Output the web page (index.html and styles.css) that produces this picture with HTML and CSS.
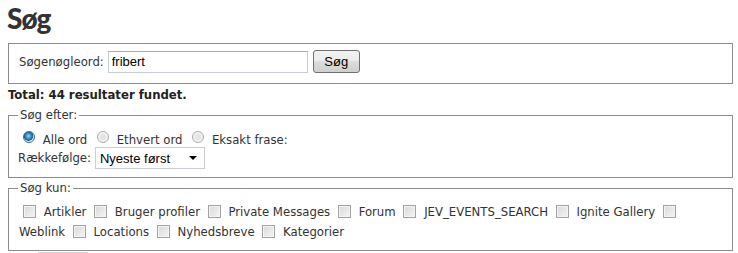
FILE: index.html
```html
<!DOCTYPE html>
<html lang="da">
<head>
    <meta charset="UTF-8">
    <title>Søg</title>
    <link rel="stylesheet" href="styles.css">
</head>
<body>
<div class="page">
    <h1 class="title">Søg</h1>

    <form class="search-form">
        <fieldset class="box keyword-box">
            <label for="searchword">Søgenøgleord:</label>
            <input type="text" id="searchword" class="text-input" value="fribert">
            <button type="button" class="btn">Søg</button>
        </fieldset>

        <p class="total">Total: 44 resultater fundet.</p>

        <fieldset class="box phrase-box">
            <legend>Søg efter:</legend>
            <div class="row radios">
                <input type="radio" name="phrase" id="all" checked> <label for="all">Alle ord</label>
                <input type="radio" name="phrase" id="any"> <label for="any">Ethvert ord</label>
                <input type="radio" name="phrase" id="exact"> <label for="exact">Eksakt frase:</label>
            </div>
            <div class="row order-row">
                <label for="ordering">Rækkefølge:</label>
                <span class="select-wrap">
                    <select id="ordering" class="select">
                        <option>Nyeste først</option>
                        <option>Ældste først</option>
                    </select>
                </span>
            </div>
        </fieldset>

        <fieldset class="box areas-box">
            <legend>Søg kun:</legend>
            <div class="areas">
                <input type="checkbox" id="a1"> <label for="a1">Artikler</label>
                <input type="checkbox" id="a2"> <label for="a2">Bruger profiler</label>
                <input type="checkbox" id="a3"> <label for="a3">Private Messages</label>
                <input type="checkbox" id="a4"> <label for="a4">Forum</label>
                <input type="checkbox" id="a5"> <label for="a5">JEV_EVENTS_SEARCH</label>
                <input type="checkbox" id="a6"> <label for="a6">Ignite Gallery</label>
                <input type="checkbox" id="a7"> <label for="a7">Weblink</label>
                <input type="checkbox" id="a8"> <label for="a8">Locations</label>
                <input type="checkbox" id="a9"> <label for="a9">Nyhedsbreve</label>
                <input type="checkbox" id="a10"> <label for="a10">Kategorier</label>
            </div>
        </fieldset>
        <div class="pager-edge"></div>
    </form>
</div>
</body>
</html>
```

FILE: styles.css
```css
body {
    margin: 0;
    background: #fff;
    color: #333;
    font-family: 'DejaVu Sans Condensed', 'DejaVu Sans', sans-serif;
    font-size: 13px;
}
.page {
    width: 725px;
    margin-left: 8px;
}
.title {
    margin: 0 0 0 -1px;
    padding-top: 1px;
    height: 35px;
    font-family: Lato, 'DejaVu Sans Condensed', sans-serif;
    font-size: 28px;
    line-height: 34px;
    font-weight: 900;
    letter-spacing: -1px;
    color: #333;
}
.box {
    margin: 0;
    border: 1px solid #8c8c8c;
    padding: 0 10px;
    min-width: 0;
}
.box legend {
    padding: 0 2px;
    margin-left: -1px;
    line-height: 16px;
}
.keyword-box {
    margin-top: 7px;
    padding-top: 6px;
    padding-bottom: 10px;
    height: 41px;
    box-sizing: border-box;
    display: flex;
    align-items: center;
}
.keyword-box label {
    margin-right: 4px;
}
.text-input {
    width: 200px;
    height: 22px;
    box-sizing: border-box;
    padding: 1px 3px;
    border: 1px solid #c9ccd3;
    border-top-color: #abadb3;
    font-family: 'Liberation Sans', Arial, sans-serif;
    font-size: 13px;
    color: #000;
    margin: 0 5px 0 0;
}
.btn {
    width: 47px;
    height: 23px;
    padding: 0;
    border: 1px solid #707070;
    border-radius: 3px;
    background: linear-gradient(#f2f2f2 0%, #ebebeb 49%, #dddddd 50%, #cfcfcf 100%);
    font-family: 'Liberation Sans', Arial, sans-serif;
    font-size: 13px;
    color: #000;
}
.total {
    margin: 0;
    padding: 3px 0 4px;
    line-height: 16px;
    font-weight: bold;
    color: #222;
}
.row {
    line-height: 20px;
    height: 20px;
}
.radios {
    margin-top: 5px;
}
.radios label {
    margin-right: 2px;
}
.order-row {
    display: flex;
    align-items: center;
    margin-bottom: 9px;
}
.order-row label {
    margin-left: -1px;
    margin-right: 4px;
}
.select-wrap {
    position: relative;
    display: inline-block;
}
.select {
    appearance: none;
    -webkit-appearance: none;
    width: 110px;
    height: 22px;
    padding: 0 0 0 4px;
    border: 1px solid #c9ccd3;
    border-radius: 0;
    background: #fff;
    font-family: 'Liberation Sans', Arial, sans-serif;
    font-size: 13px;
    color: #000;
}
.select-wrap::after {
    content: '';
    position: absolute;
    right: 8px;
    top: 9px;
    border-left: 4px solid transparent;
    border-right: 4px solid transparent;
    border-top: 4px solid #000;
    pointer-events: none;
}
input[type=radio],
input[type=checkbox] {
    appearance: none;
    -webkit-appearance: none;
    width: 12px;
    height: 12px;
    margin: 3px 4px 3px 4px;
    vertical-align: -2px;
    border: 1px solid #a2a2a2;
    background: linear-gradient(135deg, #d9d9d9, #f4f4f4);
    box-sizing: border-box;
}
input[type=radio] {
    border-radius: 50%;
    border-color: #a9a9a9;
    background: radial-gradient(circle, #e4e4e4 35%, #f5f5f5 60%);
}
input[type=radio]:checked {
    border-color: #3c6a8c;
    background: radial-gradient(circle at 45% 40%, #8fd1f3 0%, #2c8dc6 35%, #1b5a85 55%, #e6eef4 62%);
}
input[type=checkbox] {
    width: 13px;
    height: 13px;
    box-shadow: inset 0 0 0 1px #f4f4f4;
}
.areas-box {
    margin-top: 2px;
    padding-bottom: 8px;
}
.areas {
    margin-top: 6px;
    line-height: 20px;
}
.areas input[type=checkbox] {
    margin-top: 0;
    margin-bottom: 0;
}
.pager-edge {
    width: 50px;
    height: 4px;
    margin: 1px 0 0 30px;
    border-top: 1px solid #d4d4d4;
}
```
